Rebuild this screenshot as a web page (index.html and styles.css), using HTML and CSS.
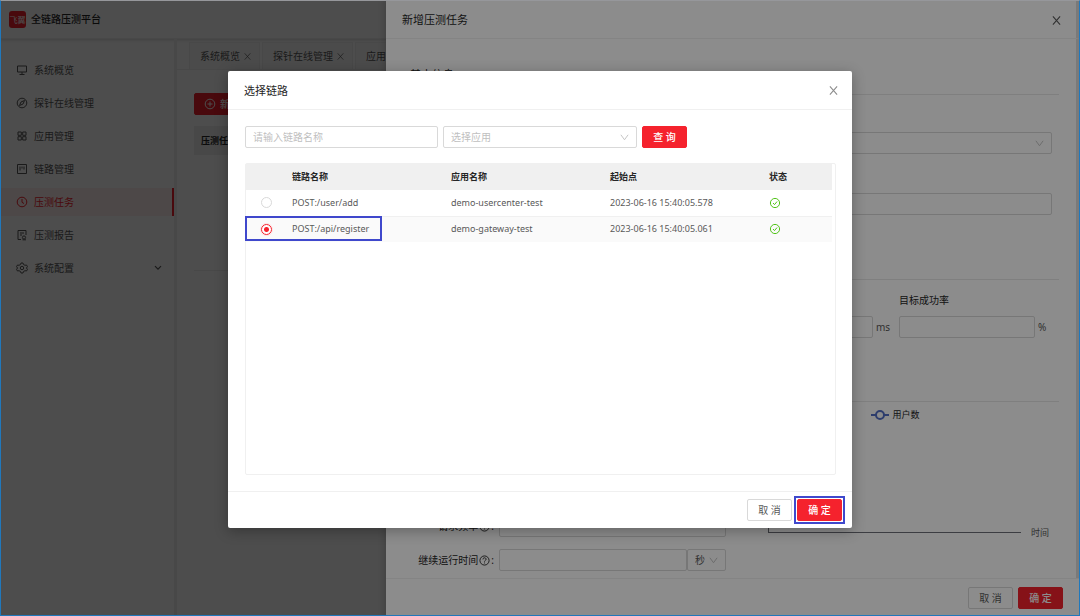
FILE: index.html
```html
<!DOCTYPE html>
<html lang="zh-CN">
<head>
<meta charset="utf-8">
<title>全链路压测平台</title>
<link rel="stylesheet" href="styles.css">
</head>
<body>
<svg class="sprite" aria-hidden="true">
  <symbol id="close" viewBox="0 0 10 10"><path d="M1 .5 9 9.5M9 .5 1 9.5"/></symbol>
  <symbol id="help" viewBox="0 0 12 12"><circle cx="6" cy="6" r="5"/><path d="M4.3 4.8C4.3 2.4 7.8 2.5 7.7 4.7 7.7 6 6 5.9 6 7.2M6 8.2v1"/></symbol>
  <symbol id="ok" viewBox="0 0 12 12"><circle cx="6" cy="6" r="4.6"/><path d="M4 6l1.5 1.6L8.1 4.5"/></symbol>
</svg>
<div class="app">
  <header class="topbar">
    <span class="logo">飞翼</span>
    <h1 class="brand">全链路压测平台</h1>
  </header>
  <div class="shell">
    <nav class="sidebar">
      <a class="item" href="#"><svg class="icon" viewBox="0 0 12 12"><path d="M1.500 2h9v6h-9zM6 8v2.500M3.500 10.500h5"/></svg>系统概览</a>
      <a class="item" href="#"><svg class="icon" viewBox="0 0 12 12"><circle cx="6" cy="6" r="4.800"/><path d="M8.500 3.500 7 7 3.500 8.500 5 5z"/></svg>探针在线管理</a>
      <a class="item" href="#"><svg class="icon" viewBox="0 0 12 12"><path d="M2 2h3.300v3.300H2zM6.700 2H10v3.300H6.700zM2 6.700h3.300V10H2zM6.700 6.700H10V10H6.700z"/></svg>应用管理</a>
      <a class="item" href="#"><svg class="icon" viewBox="0 0 12 12"><path d="M1.500 1.500h9v9h-9zM4 3.500v4M6 3.500v2M8 3.500v3"/></svg>链路管理</a>
      <a class="item active" href="#"><svg class="icon" viewBox="0 0 12 12"><circle cx="6" cy="6" r="4.800"/><path d="M6 3v3.300l2 1.200"/></svg>压测任务</a>
      <a class="item" href="#"><svg class="icon" viewBox="0 0 12 12"><path d="M5 10.500H2v-9h8V6M4 4h4M4 6h2"/><circle cx="8" cy="8.500" r="1.600"/><path d="M6.500 10.800h3.500"/></svg>压测报告</a>
      <a class="item" href="#"><svg class="icon" viewBox="0 0 12 12"><path d="M5 1h2l.5 1.500L9 3.300l1.500-.3 1 1.700L10.400 6l1.100 1.300-1 1.700L9 8.700l-1.500.8L7 11H5l-.5-1.500L3 8.700l-1.500.3-1-1.700L1.600 6 .5 4.700l1-1.700 1.500.3 1.500-.8z"/><circle cx="6" cy="6" r="1.700"/></svg>系统配置<svg class="icon caret" viewBox="0 0 10 10"><path d="M2.500 3.500 5 6l2.500-2.500"/></svg></a>
    </nav>
    <main class="content">
      <div class="tabs">
        <a class="tab" href="#">系统概览<svg class="icon"><use href="#close"/></svg></a>
        <a class="tab" href="#">探针在线管理<svg class="icon"><use href="#close"/></svg></a>
        <a class="tab" href="#">应用管理<svg class="icon"><use href="#close"/></svg></a>
      </div>
      <section class="panel">
        <button class="btn primary add" type="button"><svg class="icon" viewBox="0 0 12 12"><circle cx="6" cy="6" r="4.800"/><path d="M6 3.500v5M3.500 6h5"/></svg>新增</button>
        <table class="tasks"><thead><tr><th>压测任务</th></tr></thead><tbody><tr><td></td></tr></tbody></table>
      </section>
    </main>
  </div>
</div>

<div class="mask">
  <aside class="drawer" aria-labelledby="drawer-title">
    <header class="drawer-head">
      <h2 class="title" id="drawer-title">新增压测任务</h2>
      <button class="close" type="button" aria-label="关闭"><svg class="icon"><use href="#close"/></svg></button>
    </header>
    <div class="drawer-body">
      <h3 class="section-title">基本信息</h3>
      <div class="fields">
        <select class="control wide" aria-label="链路"><option></option></select>
        <input class="control wide" type="text" aria-label="描述">
      </div>
      <div class="goals">
        <div class="goal"><label for="rt">目标响应时间</label><span class="unit"><input class="control" id="rt" type="text">ms</span></div>
        <div class="goal"><label for="rate">目标成功率</label><span class="unit"><input class="control" id="rate" type="text">%</span></div>
      </div>
      <div class="plan">
        <form class="plan-form">
          <div class="row"><label for="step">请求频率<svg class="icon"><use href="#help"/></svg>:</label><input class="control" id="step" type="text"></div>
          <div class="row"><label for="hold">继续运行时间<svg class="icon"><use href="#help"/></svg>:</label><span class="group"><input class="control" id="hold" type="text"><select class="control seconds" aria-label="单位"><option>秒</option></select></span></div>
        </form>
        <figure class="chart">
          <figcaption class="legend"><svg viewBox="0 0 18 10"><path d="M0 5h18" /><circle cx="9" cy="5" r="4"/></svg>用户数</figcaption>
          <div class="axis"><div class="plot"></div><span class="axis-name">时间</span></div>
        </figure>
      </div>
    </div>
    <footer class="drawer-foot">
      <button class="btn" type="button">取 消</button>
      <button class="btn primary" type="button">确 定</button>
    </footer>
  </aside>
</div>

<div class="mask center">
  <div class="modal" role="dialog" aria-labelledby="modal-title">
    <header class="modal-head">
      <h2 class="title" id="modal-title">选择链路</h2>
      <button class="close" type="button" aria-label="关闭"><svg class="icon"><use href="#close"/></svg></button>
    </header>
    <div class="modal-body">
      <form class="search">
        <input class="control" type="text" placeholder="请输入链路名称" aria-label="链路名称">
        <select class="control hint" aria-label="应用"><option>选择应用</option></select>
        <button class="btn primary" type="button">查 询</button>
      </form>
      <div class="table-box">
        <table class="links">
          <colgroup><col class="pick"><col class="name"><col class="name"><col class="name"><col></colgroup>
          <thead><tr><th></th><th>链路名称</th><th>应用名称</th><th>起始点</th><th>状态</th></tr></thead>
          <tbody>
            <tr><td><input class="radio" type="radio" name="link" id="l1"></td><td><label for="l1">POST:/user/add</label></td><td>demo-usercenter-test</td><td>2023-06-16 15:40:05.578</td><td><svg class="icon ok"><use href="#ok"/></svg></td></tr>
            <tr class="selected"><td><input class="radio" type="radio" name="link" id="l2" checked></td><td><label for="l2">POST:/api/register</label></td><td>demo-gateway-test</td><td>2023-06-16 15:40:05.061</td><td><svg class="icon ok"><use href="#ok"/></svg></td></tr>
          </tbody>
        </table>
        <div class="marker row-marker"></div>
      </div>
    </div>
    <footer class="modal-foot">
      <button class="btn" type="button">取 消</button>
      <span class="confirm"><button class="btn primary" type="button">确 定</button></span>
    </footer>
  </div>
</div>
<div class="frame"></div>
</body>
</html>
```

FILE: styles.css
```css
* { box-sizing: border-box; }
body {
  margin: 0;
  height: 100vh;
  overflow: hidden;
  position: relative;
  color: #595959;
  background: #fff;
  font: 10px/16px "Noto Sans", "Noto Sans CJK SC", sans-serif;
}
h1, h2, h3, figure { margin: 0; font-weight: 400; }
a { color: inherit; text-decoration: none; }
button, input, select { font: inherit; color: inherit; margin: 0; }
.sprite { position: absolute; width: 0; height: 0; }
.icon { width: 12px; height: 12px; fill: none; stroke: currentColor; stroke-width: 1; flex: none; }

.app { height: 100%; display: flex; flex-direction: column; }
.topbar {
  height: 39px;
  flex: none;
  display: flex;
  align-items: center;
  gap: 5px;
  padding: 0 9px;
  border-bottom: 1px solid #f0f0f0;
  box-shadow: 0 1px 3px rgba(0, 0, 0, .15);
}
.logo { width: 17px; height: 17px; border-radius: 3px; background: #f5222d; color: #fff; font-size: 8px; line-height: 17px; text-align: center; }
.brand { font-size: 10px; color: #262626; font-weight: 500; }
.shell { flex: 1; display: flex; min-height: 0; }
.sidebar {
  width: 177px;
  flex: none;
  padding: 17px 0;
  border-right: 3px solid #f0f0f0;
  display: flex;
  flex-direction: column;
  gap: 5px;
}
.item { height: 28px; display: flex; align-items: center; gap: 6px; padding: 0 10px 0 16px; }
.item.active { color: #f5222d; background: #fff1f0; border-right: 2px solid #f5222d; }
.caret { margin-left: auto; }
.content { flex: 1; min-width: 0; overflow: hidden; }
.tabs { display: flex; gap: 2px; height: 31px; padding: 3px 0 0 12px; border-bottom: 1px solid #f0f0f0; }
.tab { display: flex; align-items: center; gap: 4px; padding: 0 8px 0 10px; white-space: nowrap; border: 1px solid #f0f0f0; border-bottom: 0; background: #fafafa; }
.tab .icon { width: 7px; height: 7px; }
.panel { padding: 23px 17px; }
.btn { height: 22px; padding: 0 9px; min-width: 45px; border: 1px solid #d9d9d9; border-radius: 2px; background: #fff; white-space: nowrap; }
.btn.primary { background: #f5222d; border-color: #f5222d; color: #fff; font-weight: 500; }
.add { display: flex; align-items: center; gap: 4px; }
.tasks { width: 100%; margin-top: 11px; border-collapse: collapse; text-align: left; }
.tasks th { height: 29px; padding: 0 7px; background: #f0f0f0; color: #262626; font-size: 9px; }
.tasks td { height: 115px; border-bottom: 1px solid #f0f0f0; }

.mask { position: absolute; inset: 0; background: rgba(0, 0, 0, .45); display: flex; justify-content: flex-end; }
.center { justify-content: center; align-items: flex-start; padding-top: 71px; }
.frame { position: absolute; inset: 0; border: 1px solid #2078bc; border-top-color: #96979b; pointer-events: none; }

.drawer { width: 694px; background: #fff; display: flex; flex-direction: column; box-shadow: -2px 0 6px rgba(0, 0, 0, .15); }
.drawer-head { flex: none; height: 39px; padding: 2px 12px 0 16px; display: flex; align-items: center; justify-content: space-between; border-bottom: 1px solid #f0f0f0; border-right: 4px solid #dedede; }
.title { font-size: 11px; color: #262626; }
.close { width: 16px; height: 16px; padding: 0; border: 0; background: none; display: grid; place-items: center; color: #8c8c8c; }
.close .icon { width: 9px; height: 9px; stroke-width: 1.2; }
.drawer .close { color: #595959; }
.drawer-body { flex: 1; min-height: 0; overflow: hidden; padding: 28px 17px 0 24px; border-right: 4px solid #dedede; }
.section-title { height: 28px; border-bottom: 1px solid #e8e8e8; font-size: 11px; color: #262626; }
.control {
  height: 22px;
  min-width: 0;
  padding: 0 7px;
  border: 1px solid #d9d9d9;
  border-radius: 2px;
  background: #fff;
}
.control::placeholder { color: #bfbfbf; }
select.control {
  appearance: none;
  background: #fff url("data:image/svg+xml,%3Csvg xmlns='http://www.w3.org/2000/svg' viewBox='0 0 10 10'%3E%3Cpath d='M1 2l4 5.500L9 2' fill='none' stroke='%23bfbfbf'/%3E%3C/svg%3E") no-repeat right 7px center / 9px 9px;
}
.fields { display: flex; flex-direction: column; gap: 39px; padding: 37px 7px 64px; border-bottom: 1px solid #e8e8e8; }
.wide { width: 100%; }
.goals { display: flex; justify-content: flex-end; gap: 12px; padding: 12px 10px 63px; border-bottom: 1px solid #e8e8e8; }
.goal { width: 150px; display: flex; flex-direction: column; gap: 8px; }
.goal label { color: #262626; }
.unit { display: flex; align-items: center; gap: 3px; }
.unit .control { width: 136px; flex: none; }
.plan { display: flex; }
.plan-form { width: 316px; padding: 113px 0 0; display: flex; flex-direction: column; gap: 12px; }
.row { display: flex; align-items: center; }
.row label { width: 89px; flex: none; padding-right: 5px; display: flex; align-items: center; justify-content: flex-end; gap: 1px; color: #262626; }
.row label .icon { width: 11px; height: 11px; }
.row > .control, .group { flex: 1; min-width: 0; }
.group { display: flex; }
.group input { flex: 1; }
.group .seconds { width: 39px; }
.chart { flex: 1; padding: 5px 10px 0 42px; }
.legend { display: flex; align-items: center; justify-content: center; gap: 3px; margin-right: 26px; font-size: 9px; color: #262626; }
.legend svg { width: 18px; height: 10px; fill: #fff; stroke: #5470c6; stroke-width: 2; }
.axis { display: flex; align-items: flex-end; gap: 10px; font-size: 9px; }
.axis-name { margin-bottom: -8px; }
.plot { flex: 1; height: 110px; border: solid #6e7079; border-width: 0 0 1px 1px; }
.drawer-foot { flex: none; height: 38px; padding: 8px 17px 0; display: flex; justify-content: flex-end; gap: 5px; border-top: 1px solid #f0f0f0; }

.modal { width: 624px; background: #fff; border-radius: 2px; box-shadow: 0 3px 14px rgba(0, 0, 0, .3); }
.modal-head { height: 39px; padding: 1px 11px 0 16px; display: flex; align-items: center; justify-content: space-between; border-bottom: 1px solid #f0f0f0; }
.modal-body { padding: 16px 16px 16px 17px; }
.search { display: flex; gap: 5px; }
.search input { width: 193px; }
.search select { width: 194px; }
.hint { color: #bfbfbf; }
.table-box { position: relative; height: 312px; margin-top: 15px; padding-right: 3px; border: 1px solid #f0f0f0; border-radius: 2px; }
.links { width: 100%; table-layout: fixed; border-collapse: collapse; text-align: left; font-size: 9px; }
.links th { height: 26px; background: #f0f0f0; color: #262626; font-weight: 700; }
.links td { height: 26px; border-bottom: 1px solid #f0f0f0; }
.links th, .links td { padding: 0 0 0 5px; white-space: nowrap; }
.links td:first-child { padding: 0; text-align: center; }
.links .selected td { background: #fafafa; border: 0; }
.pick { width: 41px; }
.name { width: 159px; }
.ok { display: block; color: #52c41a; }
.radio { appearance: none; display: block; width: 11px; height: 11px; margin: 0 auto; border: 1px solid #d9d9d9; border-radius: 50%; background: #fff; }
.radio:checked { border-color: #f5222d; background: radial-gradient(circle, #f5222d 0 2px, #fff 3px); box-shadow: 0 0 0 1px #fde3e4; }
.marker { position: absolute; border: 2px solid #3f48cc; }
.row-marker { left: -1px; top: 52px; width: 137px; height: 25px; }
.modal-foot { height: 37px; padding: 0 7px; display: flex; align-items: center; justify-content: flex-end; gap: 2px; border-top: 1px solid #f0f0f0; }
.confirm { display: flex; padding: 1px; border: 2px solid #3f48cc; }
```
